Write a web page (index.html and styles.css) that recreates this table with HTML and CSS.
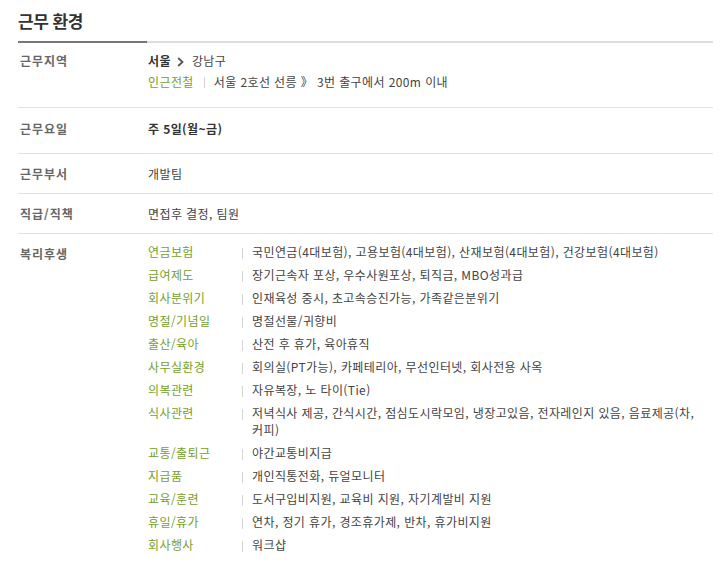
FILE: index.html
```html
<!DOCTYPE html>
<html lang="ko">
<head>
<meta charset="utf-8">
<link rel="stylesheet" href="styles.css">
</head>
<body>
<section class="work">
  <h2 class="title">근무 환경</h2>
  <div class="row row-loc">
    <div class="label">근무지역</div>
    <div class="value">
      <div class="line"><strong>서울</strong><svg class="chev" width="7" height="10" viewBox="0 0 7 10"><path d="M1.2 1 L5.5 5 L1.2 9" fill="none" stroke="#555" stroke-width="1.8"/></svg>강남구</div>
      <div class="line"><span class="green">인근전철</span><span class="bar"></span>서울 2호선 선릉 》 3번 출구에서 200m 이내</div>
    </div>
  </div>
  <div class="row row-days">
    <div class="label">근무요일</div>
    <div class="value"><strong>주 5일(월~금)</strong></div>
  </div>
  <div class="row">
    <div class="label">근무부서</div>
    <div class="value">개발팀</div>
  </div>
  <div class="row">
    <div class="label">직급/직책</div>
    <div class="value">면접후 결정, 팀원</div>
  </div>
  <div class="row row-ben">
    <div class="label">복리후생</div>
    <div class="value">
      <ul class="benefits">
        <li><span class="bname">연금보험</span><span class="bval">국민연금(4대보험), 고용보험(4대보험), 산재보험(4대보험), 건강보험(4대보험)</span></li>
        <li><span class="bname">급여제도</span><span class="bval">장기근속자 포상, 우수사원포상, 퇴직금, MBO성과급</span></li>
        <li><span class="bname">회사분위기</span><span class="bval">인재육성 중시, 초고속승진가능, 가족같은분위기</span></li>
        <li><span class="bname">명절/기념일</span><span class="bval">명절선물/귀향비</span></li>
        <li><span class="bname">출산/육아</span><span class="bval">산전 후 휴가, 육아휴직</span></li>
        <li><span class="bname">사무실환경</span><span class="bval">회의실(PT가능), 카페테리아, 무선인터넷, 회사전용 사옥</span></li>
        <li><span class="bname">의복관련</span><span class="bval">자유복장, 노 타이(Tie)</span></li>
        <li><span class="bname">식사관련</span><span class="bval">저녁식사 제공, 간식시간, 점심도시락모임, 냉장고있음, 전자레인지 있음, 음료제공(차, 커피)</span></li>
        <li><span class="bname">교통/출퇴근</span><span class="bval">야간교통비지급</span></li>
        <li><span class="bname">지급품</span><span class="bval">개인직통전화, 듀얼모니터</span></li>
        <li><span class="bname">교육/훈련</span><span class="bval">도서구입비지원, 교육비 지원, 자기계발비 지원</span></li>
        <li><span class="bname">휴일/휴가</span><span class="bval">연차, 정기 휴가, 경조휴가제, 반차, 휴가비지원</span></li>
        <li><span class="bname">회사행사</span><span class="bval">워크샵</span></li>
      </ul>
    </div>
  </div>
</section>
</body>
</html>
```

FILE: styles.css
```css
* { box-sizing: border-box; }
html, body { margin: 0; padding: 0; background: #fff; }
body {
  font-family: "Noto Sans CJK KR", "Noto Sans", sans-serif;
  font-size: 12px;
  color: #444;
  letter-spacing: 0.4px;
  word-break: keep-all;
}
.work {
  width: 695px;
  margin-left: 18px;
}
.title {
  margin: 0;
  padding-top: 9px;
  height: 43px;
  font-size: 17px;
  line-height: 24px;
  font-weight: bold;
  color: #333;
  letter-spacing: -0.5px;
  border-bottom: 2px solid #ddd;
  position: relative;
}
.title::after {
  content: "";
  position: absolute;
  left: 0;
  bottom: -2px;
  width: 129px;
  height: 2px;
  background: #777;
}
.row {
  display: grid;
  grid-template-columns: 130px 1fr;
  border-bottom: 1px solid #e2e2e2;
  padding: 9px 0 9px;
  line-height: 21px;
}
.row-loc { padding: 7px 0 15px; }
.row-days { padding: 10px 0 14px; }
.row-ben { border-bottom: 0; padding-top: 9px; }
.label {
  padding-left: 2px;
  color: #666;
  font-weight: bold;
  letter-spacing: 1px;
}
.value { color: #444; }
.value strong { color: #333; }
.chev { margin: 0 8px 0 6px; vertical-align: -1px; }
.green { color: #76a02a; }
.bar {
  display: inline-block;
  width: 1px;
  height: 11px;
  background: #d5d5d5;
  margin: 0 9px 0 10px;
  vertical-align: -1px;
}
.benefits {
  list-style: none;
  margin: 0;
  padding: 0;
}
.benefits li {
  display: flex;
  line-height: 17px;
  margin-bottom: 6px;
}
.bname {
  flex: 0 0 94px;
  color: #76a02a;
  position: relative;
}
.bname::after {
  content: "";
  position: absolute;
  left: 94px;
  top: 5px;
  width: 1px;
  height: 11px;
  background: #d5d5d5;
}
.bval {
  flex: 1;
  padding-left: 10px;
  padding-right: 4px;
}
```
